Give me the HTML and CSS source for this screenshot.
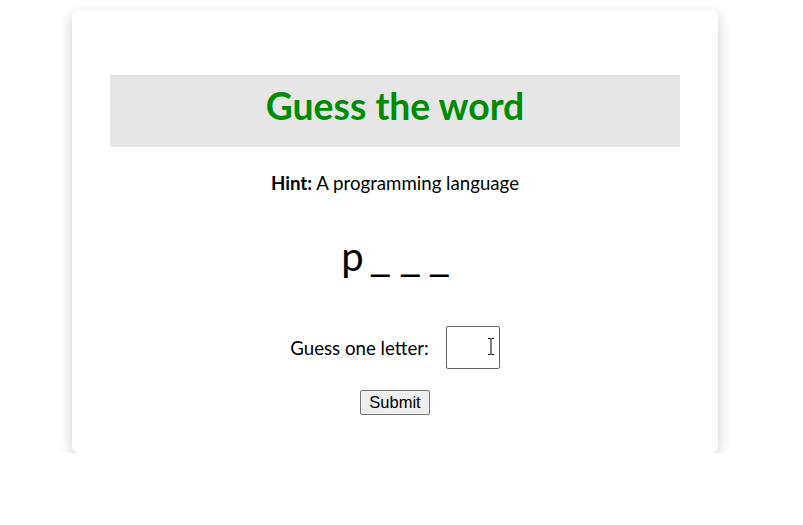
FILE: index.html
```html
<!DOCTYPE html>
<html>
<head>
<meta charset="utf-8">
<link rel="stylesheet" href="styles.css">
</head>
<body>
<div class="card">
  <h1 class="title">Guess the word</h1>
  <p class="hint"><b>Hint:</b> A programming language</p>
  <p class="word"><span class="lead">p</span> <span class="blank">_</span> <span class="blank">_</span> <span class="blank">_</span></p>
  <form class="form">
    <div class="row">
      <label class="label" for="g">Guess one letter:</label>
      <span class="input-wrap">
        <input id="g" class="input" type="text" maxlength="1">
        <svg class="cursor" width="8" height="19" viewBox="0 0 8 19"><path d="M1 1.5h2.2l.8.7.8-.7H7M4 2.2v14.6M1 17.5h2.2l.8-.7.8.7H7" fill="none" stroke="#fff" stroke-width="2.4"/><path d="M1 1.5h2.2l.8.7.8-.7H7M4 2.2v14.6M1 17.5h2.2l.8-.7.8.7H7" fill="none" stroke="#000" stroke-width="1"/></svg>
      </span>
    </div>
    <button class="btn" type="button">Submit</button>
  </form>
</div>
</body>
</html>
```
FILE: styles.css
```css
html, body { margin: 0; padding: 0; background: #fff; }
body { font-family: Lato, "Open Sans", sans-serif; color: #000; }
.card {
  box-sizing: border-box;
  width: 646px;
  height: 443px;
  margin: 10px 0 0 72px;
  padding: 65px 38px 0;
  background: #fff;
  border-radius: 7px;
  box-shadow: 0 4px 14px rgba(0,0,0,0.2);
  text-align: center;
}
.title {
  box-sizing: border-box;
  margin: 0;
  height: 72px;
  line-height: 62px;
  padding-bottom: 10px;
  background: #e6e6e6;
  color: #008c00;
  font-size: 37.33px;
  font-weight: 700;
}
.hint { margin: 23px 0 0; font-size: 18.67px; line-height: 26px; }
.word { margin: 36px 0 0; font-size: 40px; line-height: 48px; word-spacing: 1px; }
.lead { letter-spacing: -4px; }
.blank { display: inline-block; transform: scaleX(1.2); }
.form { margin: 46px 0 0; display: flex; flex-direction: column; align-items: center; }
.row { display: flex; align-items: center; gap: 17px; }
.label { font-size: 18.67px; }
.input-wrap { position: relative; display: block; }
.input {
  display: block;
  box-sizing: border-box;
  width: 54px; height: 43px;
  border: 1px solid #666;
  border-radius: 2px;
  padding: 0;
  margin: 0;
  background: #fff;
}
.cursor { position: absolute; left: 41px; top: 11px; }
.btn {
  margin-top: 21px;
  font-family: "Liberation Sans", Arial, sans-serif;
  font-size: 16.5px;
  height: 25px;
  padding: 0 8px;
  background: #efefef;
  border: 1px solid #767676;
  border-radius: 2px;
  color: #000;
}
```
